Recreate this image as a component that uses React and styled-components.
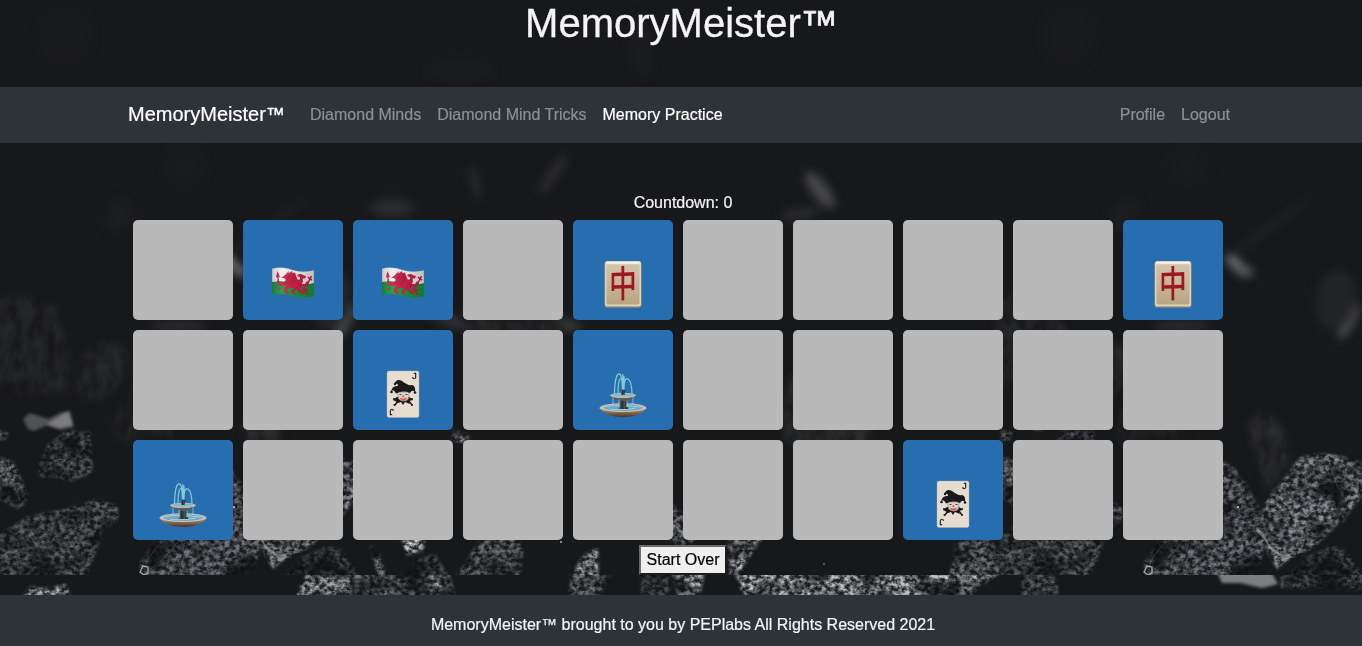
import React from 'react';
import styled, { createGlobalStyle } from 'styled-components';

const GlobalStyle = createGlobalStyle`
  * { box-sizing: border-box; }
  html, body { margin: 0; padding: 0; overflow: hidden; background: #17181a; }
`;

const Page = styled.div`
  position: relative;
  isolation: isolate;
  display: flex;
  flex-direction: column;
  height: 646px;
  overflow: hidden;
  background: #17181a;
  color: #f4f4f4;
  font: 16px/24px "Liberation Sans", Arial, sans-serif;
`;

const Backdrop = styled.svg`
  position: absolute;
  inset: 0;
  z-index: -1;
  width: 1362px;
  height: 646px;
`;

const Header = styled.header`
  flex: 0 0 87px;
  text-align: center;
`;

const Title = styled.h1`
  margin: 0;
  padding-left: 1px;
  font-size: 40px;
  font-weight: 400;
  line-height: 46px;
  -webkit-text-stroke: 0.3px currentColor;
`;

const TradeMark = styled.span`
  font-size: 0.93em;
  -webkit-text-stroke: 0.02em currentColor;
`;

const NavBar = styled.nav`
  flex: 0 0 56px;
  display: flex;
  align-items: center;
  padding: 0 124px 0 128px;
  background: #2e3337;
  -webkit-text-stroke: 0.2px currentColor;
`;

const Brand = styled.a`
  width: 174px;
  padding-bottom: 2px;
  color: #fff;
  font-size: 20px;
  line-height: 30px;
  white-space: nowrap;
`;

const NavGroup = styled.div`
  display: flex;
  margin-left: ${({ $end }) => ($end ? 'auto' : '0')};
`;

const NavLink = styled.a`
  padding: 8px;
  color: ${({ $active }) => ($active ? '#fff' : '#8d9093')};
  white-space: nowrap;
`;

const Main = styled.main`
  flex: 0 0 452px;
  display: flex;
  flex-direction: column;
  padding: 48px 124px 0 128px;
`;

const Countdown = styled.div`
  height: 24px;
  text-align: center;
  -webkit-text-stroke: 0.2px currentColor;
`;

const Board = styled.div`
  display: grid;
  grid-template-columns: repeat(10, 100px);
  grid-auto-rows: 100px;
  gap: 10px;
  padding: 5px;
`;

const Card = styled.div`
  display: flex;
  justify-content: center;
  padding-top: 38px;
  border-radius: 5px;
  background: ${({ $open }) => ($open ? '#276eb1' : '#b9b9b9')};
`;

const Picture = styled.svg`
  display: block;
  width: 50px;
  height: 52px;
  overflow: visible;
`;

const StartOver = styled.button`
  align-self: center;
  width: 88px;
  height: 30px;
  padding: 0;
  border: 2px solid;
  border-color: #6b6b6b #1c1c1c #1c1c1c #6b6b6b;
  border-radius: 0;
  background: #efefef;
  color: #000;
  font: inherit;
  white-space: nowrap;
  -webkit-text-stroke: 0.2px currentColor;
`;

const Footer = styled.footer`
  flex: 0 0 51px;
  padding: 18px 0 0 4px;
  background: #2e3337;
  text-align: center;
  -webkit-text-stroke: 0.2px currentColor;
`;

const farRocks = [
  ['M-10 300 25 288 55 315 72 345 70 395 25 398 -10 385Z', '#252628'],
  ['M82 352 100 338 128 345 130 375 105 402 80 402 74 392Z', '#28292b'],
  ['M132 387 165 370 185 388 184 440 163 439 120 446 107 428Z', '#232426'],
  ['M780 380 845 350 880 390 870 450 820 470 781 442Z', '#2a2b2d'],
  ['M450 300 500 320 550 315 570 330 535 340 480 335Z', '#292a2c'],
  ['M239 427 253 407 276 417 289 450 289 463 263 497 253 467Z', '#2a2b2d'],
];

const rocks = [
  ['M-3 431 9 433 6 440 -3 440Z', '#858688'],
  ['M39 460 48 445 66 430 90 432 93 472 72 482 50 477 39 478Z', '#4a4b4e'],
  ['M-3 455 14 463 28 496 20 510 -3 498Z', '#707174'],
  ['M-4 537 25 517 70 508 95 500 118 505 118 518 100 542 85 580 -4 580Z', '#505154'],
  ['M139 565 155 540 180 500 219 459 234 472 247 490 257 513 263 535 252 580 143 580Z', '#626367'],
  ['M296 457 323 453 358 462 366 485 340 520 309 547 289 557 273 570 263 550 253 528 263 500Z', '#7c7d81'],
  ['M280 580 301 558 323 547 339 548 362 580Z', '#3e3f42'],
  ['M369 545 376 547 389 580 379 580Z', '#66686a'],
  ['M401 537 425 534 423 551 407 555Z', '#d0d1d4'],
  ['M404 580 413 558 435 554 452 580Z', '#383a3c'],
  ['M453 580 480 540 489 530 518 534 523 552 520 580Z', '#5c5d60'],
  ['M568 580 583 555 598 548 599 580Z', '#a0a1a4'],
  ['M672 500 700 536 684 548 662 536Z', '#707173'],
  ['M730 580 727 545 738 530 766 532 748 558 736 580Z', '#c0c1c4'],
  ['M948 580 956 543 982 538 1004 546 1004 580Z', '#606164'],
  ['M453 430 471 435 466 443 452 440Z', '#999'],
];

const hazeSpots = [
  [230, 262, 8, 3, 40, '#77787b'],
  [240, 271, 7, 3, 15, '#66676a'],
  [345, 322, 3, 18, 30, '#505153'],
  [332, 300, 18, 28, 10, '#232426'],
  [265, 228, 48, 1, -35, '#232426'],
  [185, 166, 18, 18, 0, '#1a1b1d'],
  [392, 208, 20, 8, 0, '#2a2b2d'],
  [475, 182, 2, 16, -15, '#292a2c'],
  [553, 174, 3, 22, 35, '#2c2d30'],
  [820, 190, 6, 20, -38, '#47484b'],
  [800, 214, 18, 4, -10, '#2a2b2d'],
  [450, 320, 26, 4, 20, '#2f3033'],
  [120, 215, 12, 16, 30, '#1c1d1f'],
  [178, 326, 26, 3, 0, '#2c2d2f'],
  [50, 312, 3, 2, 0, '#3c3d40'],
  [48, 355, 8, 30, 10, '#252628'],
  [567, 325, 12, 3, 10, '#3d3e40'],
  [65, 35, 24, 26, 30, '#191a1c'],
  [460, 70, 30, 12, 0, '#1b1c1e'],
  [640, 45, 8, 30, -10, '#1c1d1f'],
];

const lowerStones = [
  ['M20 600 31 586 49 589 65 584 73 600Z', '#a7a8aa'],
  ['M295 600 307 570 362 570 358 600Z', '#9a9b9e'],
  ['M360 600 365 570 450 570 456 600Z', '#5a5b5e'],
  ['M424 570 440 581 457 600 446 600Z', '#a7a8aa'],
  ['M568 600 572 570 615 570 597 600Z', '#606164'],
  ['M640 570 668 570 670 600 640 600Z', '#3a3b3e'],
  ['M672 570 706 570 699 600 678 600Z', '#a5a6a8'],
  ['M733 570 1004 570 980 586 966 600 746 600Z', '#b4b5b8'],
  ['M1020 570 1055 570 1060 600 1023 600Z', '#4a4b4e'],
  ['M1277 570 1366 570 1366 590 1280 588Z', '#38393c'],
];

const seams = [
  'M144 568Q155 545 165 540M148 571Q170 554 181 538M180 570 188 541M216 575 234 545 255 519M224 556 247 525M204 575Q218 550 236 535',
  'M296 457Q310 469 313 480M263 501 302 458M265 502Q285 510 331 501M276 495 322 483M325 460 334 489M266 516 310 512M285 529 331 522',
  'M42 470Q55 457 65 460M60 477 88 443M5 462 20 501',
  'M36 560Q55 532 80 520M6 560 41 526',
];

function CoalBackdrop() {
  return (
    <Backdrop viewBox="0 0 1362 646" aria-hidden="true">
      <defs>
        <filter id="grain" filterUnits="userSpaceOnUse" x="-20" y="0" width="1400" height="646" colorInterpolationFilters="sRGB">
          <feTurbulence type="fractalNoise" baseFrequency=".2 .24" numOctaves="4" seed="12" result="noise" />
          <feColorMatrix in="noise" type="matrix" values="2.4 0 0 0 -.76 2.4 0 0 0 -.76 2.4 0 0 0 -.76 0 0 0 0 1" result="fine" />
          <feTurbulence type="fractalNoise" baseFrequency=".035 .05" numOctaves="3" seed="5" result="wide" />
          <feColorMatrix in="wide" type="matrix" values="3 0 0 0 -.75 3 0 0 0 -.75 3 0 0 0 -.75 0 0 0 0 1" result="patches" />
          <feComposite in="fine" in2="patches" operator="arithmetic" k1=".8" k2=".15" k3=".1" k4="0" result="stone" />
          <feGaussianBlur in="SourceGraphic" stdDeviation="1.6" result="soft" />
          <feComposite in="stone" in2="soft" operator="arithmetic" k1="1" k2="0" k3="0" k4="0" result="lit" />
          <feColorMatrix in="lit" type="matrix" values="1 0 0 0 .06 0 1 0 0 .063 0 0 1 0 .07 0 0 0 0 1" result="opaque" />
          <feComposite in="opaque" in2="soft" operator="in" />
        </filter>
        <filter id="haze" filterUnits="userSpaceOnUse" x="-40" y="-40" width="1100" height="660" colorInterpolationFilters="sRGB"><feGaussianBlur stdDeviation="5" /></filter>
        <filter id="far" filterUnits="userSpaceOnUse" x="-40" y="0" width="1100" height="620" colorInterpolationFilters="sRGB">
          <feTurbulence type="fractalNoise" baseFrequency=".09 .05" numOctaves="3" seed="8" result="n" />
          <feColorMatrix in="n" type="matrix" values=".8 0 0 0 .4 .8 0 0 0 .4 .8 0 0 0 .4 0 0 0 0 1" result="g" />
          <feGaussianBlur in="SourceGraphic" stdDeviation="4" result="s" />
          <feComposite in="g" in2="s" operator="arithmetic" k1=".9" k2="0" k3=".1" k4="0" result="t" />
          <feComposite in="t" in2="s" operator="in" />
        </filter>
        <filter id="seamSoft"><feGaussianBlur stdDeviation=".7" /></filter>
        <filter id="glintSoft"><feGaussianBlur stdDeviation="1.6" /></filter>
        <clipPath id="upper"><rect width="1362" height="575" /></clipPath>
        <clipPath id="lower"><rect y="575" width="1362" height="20" /></clipPath>
        <g id="coal">
          <g filter="url(#haze)">
            {hazeSpots.map(([x, y, rx, ry, angle, fill], i) => (
              <ellipse key={i} cx={x} cy={y} rx={rx + 2} ry={ry + 2} fill={fill} transform={`rotate(${angle} ${x} ${y})`} />
            ))}
          </g>
          <g filter="url(#far)">{farRocks.map(([d, fill]) => <path key={d} d={d} fill={fill} />)}</g>
          <g filter="url(#glintSoft)">
            <path d="M23 419 30 413 48 419 60 413 70 411 74 427 60 430 47 425 34 431 28 429Z" fill="#505153" />
            <path d="M46 425 68 411 73 425 60 428Z" fill="#7b7c7e" />
          </g>
          <g filter="url(#grain)">{rocks.map(([d, fill]) => <path key={d} d={d} fill={fill} />)}</g>
          <g fill="none" stroke="#939497" strokeOpacity=".24" strokeWidth="1" filter="url(#seamSoft)">
            {seams.map((d) => <path key={d} d={d} />)}
          </g>
          <path d="m253 527 7 7 3 8 12 11 15 4-9 3-14-10-7-11-8-8Z" fill="#b1b2b3" opacity=".5" filter="url(#seamSoft)" />
          <path d="m140 572 3-6 5 1 0 6-4 2Z" fill="none" stroke="#a8a9aa" strokeWidth="1.3" filter="url(#seamSoft)" />
          <g fill="#c0c1c2"><circle cx="234" cy="507" r="1.1" /><circle cx="561" cy="542" r=".9" /><circle cx="824" cy="564" r=".7" /></g>
        </g>
      </defs>
      <g clipPath="url(#upper)"><use href="#coal" /><use href="#coal" x="1004" /></g>
      <g clipPath="url(#lower)">
        <g filter="url(#grain)">{lowerStones.map(([d, fill]) => <path key={d} d={d} fill={fill} />)}</g>
        <path d="M1216 570 1270 570 1278 584 1262 588 1240 583 1222 583Z" fill="#7d7e80" filter="url(#glintSoft)" />
      </g>
    </Backdrop>
  );
}

function WalesFlag() {
  return (
    <Picture viewBox="0 0 50 52" role="img" aria-label="Wales">
      <defs>
        <linearGradient id="flagShade"><stop stopColor="#000" stopOpacity=".16" /><stop offset=".25" stopColor="#fff" stopOpacity=".08" /><stop offset=".6" stopColor="#000" stopOpacity=".06" /><stop offset="1" stopColor="#000" stopOpacity=".2" /></linearGradient>
      </defs>
      <path d="M4 10.500Q14 8 25 12Q35 15 46 12.200V26H4Z" fill="#eeecef" />
      <path d="M4 24Q14 22 25 25Q36 28 46 25V38.500Q36 41 25 38Q14 34.500 4 37Z" fill="#15963d" />
      <g fill="#c91f45">
        <path d="M9.500 13 12 19 10.500 19 11 23 15 25 18 22 16 20 13 20 17 17 21 13 20.500 15.500 24 13 24.500 15 27 14.500 28.500 19 30 22 32 21 32 19 29.500 18.500 29.500 16.500 33 16 36 17.500 38 18 37 20.500 34.500 20.500 35 23 34 26 37 26 39 23 41 25 40 28 36.500 29.500 34 28.500 32 31 36 34 36 36 32.500 35.500 29 32 25.500 30 21.500 30 18.500 32 21 35 20 36.500 16 34 16 31 18 28 12 28 9 25 9.500 20 8 19Z" />
        <path d="M12 29 9 31 10 32 13 31M26 30 23 34 26 37 28 36 25.500 34 28.500 32M33 29 39 31 39 35 42 37 39 37 36 34M8 26 7 27.500 9 28" />
        <path d="M40 25 42 21 40 19M42 21 43.500 18M42 21 44 22" fill="none" stroke="#c91f45" strokeWidth="1.500" />
      </g>
      <path d="M18.500 23 22.500 16M21 24 26 16M24 25 27.500 19" stroke="#8f1833" strokeWidth=".8" />
      <path d="M13 25Q20 24 25 27M30 25 33 29" fill="none" stroke="#9b1c37" strokeWidth=".8" />
      <path d="M4 10.500Q14 8 25 12Q35 15 46 12.200V38.500Q36 41 25 38Q14 34.500 4 37Z" fill="url(#flagShade)" stroke="#59706c" strokeOpacity=".5" strokeWidth=".6" />
    </Picture>
  );
}

const DragonText = styled.text`
  fill: #9d171e;
  font: 500 29px "Noto Sans CJK TC", sans-serif;
  text-anchor: middle;
`;

function MahjongTile() {
  return (
    <Picture viewBox="0 0 50 52" role="img" aria-label="Red dragon tile">
      <defs><linearGradient id="bone" x2="0" y2="1"><stop stopColor="#d1c4ae" /><stop offset="1" stopColor="#b9a582" /></linearGradient></defs>
      <rect x="6.500" y="3" width="37" height="46.500" rx="2.800" fill="#a99675" />
      <rect x="7" y="3.300" width="36" height="45" rx="2.500" fill="#dfd2bc" />
      <rect x="8.500" y="6.500" width="33" height="40" rx="1.800" fill="url(#bone)" />
      <path d="M9 4.800H41" stroke="#faf4e8" strokeWidth="2" strokeLinecap="round" />
      <DragonText transform="translate(25 39.200) skewY(-2) scale(.96 1.280)">中</DragonText>
    </Picture>
  );
}

const PipText = styled.text`
  fill: #191a1a;
  font: 9.5px "Liberation Sans", sans-serif;
  stroke: #191a1a;
  stroke-width: 0.3px;
`;

function JokerCard() {
  return (
    <Picture viewBox="0 0 50 52" role="img" aria-label="Joker">
      <rect x="9" y="3" width="32" height="46.500" rx="2" fill="#e6ddd0" stroke="#b7b4aa" strokeWidth=".4" />
      <PipText x="34" y="11">J</PipText>
      <PipText x="-16" y="-41" transform="rotate(180)">J</PipText>
      <path d="M19 29 15 32 19 34 17 36 23 34 25 37 27 34 32 36 31 33 35 32 31 29Z" fill="#191a1c" />
      <g fill="none" stroke="#191a1c" strokeWidth="1.300"><path d="M19 31 15 31M20 33 17 37M31 33 34 37M31 31 35 31" /></g>
      <path d="M19.500 24H31L30.500 31Q26 35.500 20.500 31Z" fill="#d9d3c9" stroke="#67615d" strokeWidth=".4" />
      <path d="M13 24Q14 17 20 18Q20 14 16 17Q18 10 24 13Q30 18 34 17Q38 18 37 24Q34 21 32 25Q25 22 18 25.500Q15 20 13 24Z" fill="#18191b" />
      <g fill="#18191b"><circle cx="13.500" cy="24" r="1.300" /><circle cx="17" cy="16" r="1.200" /><circle cx="37" cy="24.500" r="1.300" /><circle cx="16.500" cy="37" r="1" /><circle cx="34" cy="37" r="1" /></g>
      <path d="M21.500 26.500h2m4 0h2" stroke="#344b50" strokeWidth="1.200" />
      <circle cx="25.300" cy="28.300" r="1" fill="#df554e" />
      <path d="M22 29.500Q25 31.500 29 29.500Q28 33.500 25 32.500Q22.500 33 22 29.500Z" fill="#df5a54" />
    </Picture>
  );
}

function Fountain() {
  return (
    <Picture viewBox="0 0 50 52" role="img" aria-label="Fountain">
      <defs>
        <linearGradient id="bowl" x2="0" y2="1"><stop stopColor="#cfb8a0" /><stop offset=".45" stopColor="#8d6e51" /><stop offset="1" stopColor="#463529" /></linearGradient>
        <linearGradient id="stone"><stop stopColor="#858881" /><stop offset=".4" stopColor="#252d30" /><stop offset=".65" stopColor="#485150" /><stop offset="1" stopColor="#202427" /></linearGradient>
      </defs>
      <ellipse cx="25" cy="40" rx="23.500" ry="4.800" fill="#d0c1b0" />
      <path d="M1.500 40Q8 49 25 49Q42 49 48.500 40Q43 44 25 44Q7 44 1.500 40Z" fill="url(#bowl)" />
      <ellipse cx="25" cy="39.600" rx="19.500" ry="3.400" fill="#65a9cb" />
      <path d="M7 39q9-3 36 0M12 41q11 2 26-1" stroke="#b0dbe2" strokeWidth=".8" fill="none" />
      <path d="M21 31H29L28.500 39H30V41H20V39H21.500Z" fill="url(#stone)" />
      <ellipse cx="25" cy="27.500" rx="13" ry="2.800" fill="#c1b8ad" />
      <path d="M12 28Q16 33 25 33Q35 33 38 28Q31 31 25 30Q18 31 12 28Z" fill="#595c5a" />
      <ellipse cx="25" cy="27" rx="10.500" ry="1.500" fill="#78bad5" />
      <path d="M22.500 22H27.500L26.500 27H23.500Z" fill="url(#stone)" />
      <g fill="none" stroke="#83cad2" strokeWidth="1.200" strokeLinecap="round">
        <path d="M16.500 26Q17 4 22 6Q24 8 24.500 21M20 27Q20 8 24 11M26 21Q26 9 30 11Q34 14 34 27M24.800 21V6.500M26 20V8" />
        <path d="M15 29V36M35 29V36M21 32V39M29 33V39" stroke="#b0dfe0" strokeWidth=".6" />
      </g>
    </Picture>
  );
}

const pictures = { wales: WalesFlag, tile: MahjongTile, joker: JokerCard, fountain: Fountain };
const board = [
  null, 'wales', 'wales', null, 'tile', null, null, null, null, 'tile',
  null, null, 'joker', null, 'fountain', null, null, null, null, null,
  'fountain', null, null, null, null, null, null, 'joker', null, null,
];

export default function App() {
  return (
    <>
      <GlobalStyle />
      <Page>
        <CoalBackdrop />
        <Header><Title>MemoryMeister<TradeMark>™</TradeMark></Title></Header>
        <NavBar>
          <Brand>MemoryMeister<TradeMark>™</TradeMark></Brand>
          <NavGroup>
            <NavLink>Diamond Minds</NavLink>
            <NavLink>Diamond Mind Tricks</NavLink>
            <NavLink $active>Memory Practice</NavLink>
          </NavGroup>
          <NavGroup $end>
            <NavLink>Profile</NavLink>
            <NavLink>Logout</NavLink>
          </NavGroup>
        </NavBar>
        <Main>
          <Countdown>Countdown: 0</Countdown>
          <Board>
            {board.map((name, i) => {
              const Face = name && pictures[name];
              return <Card key={i} $open={Boolean(name)}>{Face && <Face />}</Card>;
            })}
          </Board>
          <StartOver>Start Over</StartOver>
        </Main>
        <Footer>MemoryMeister™ brought to you by PEPlabs All Rights Reserved 2021</Footer>
      </Page>
    </>
  );
}
